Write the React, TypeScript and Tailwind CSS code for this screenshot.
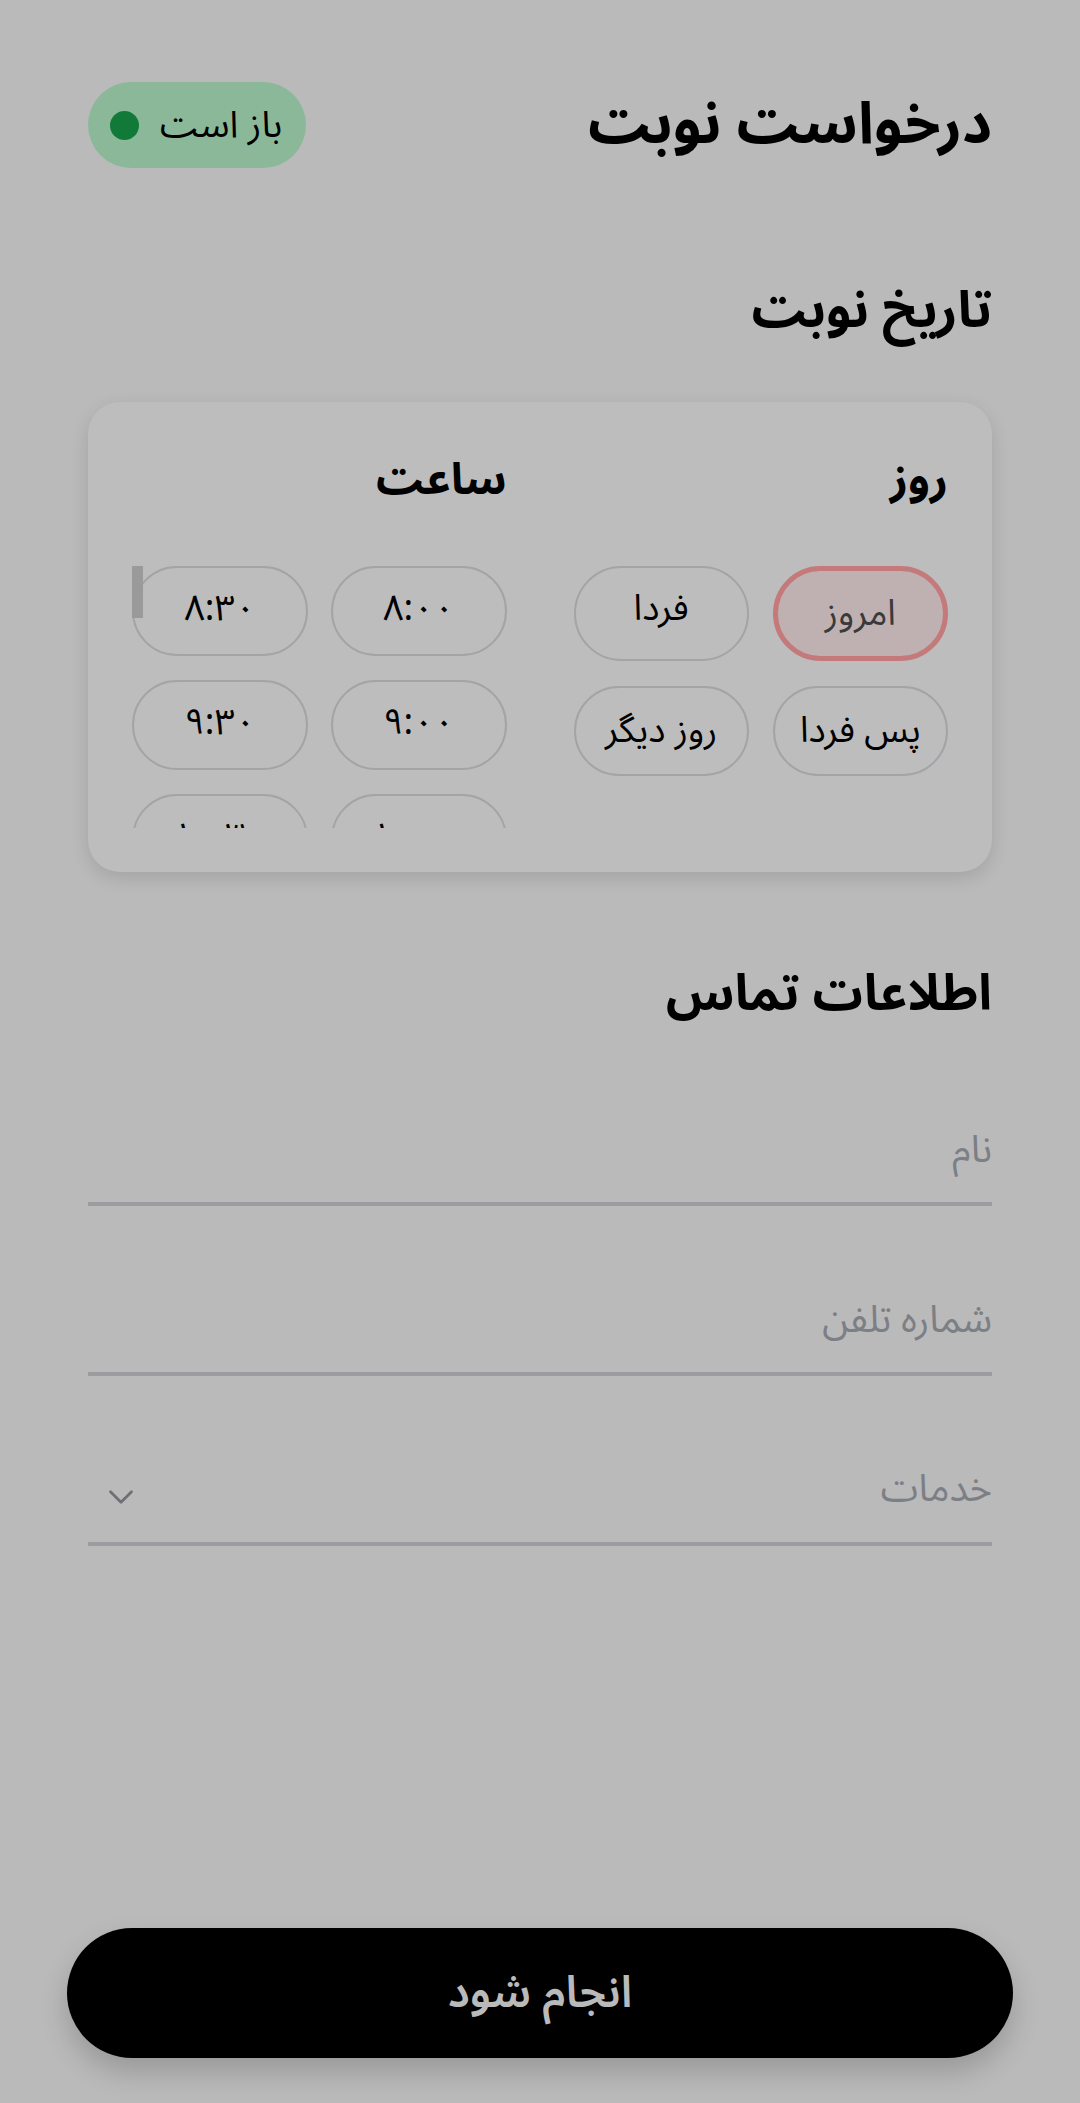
import { ChevronDown } from "lucide-react";

const days = ["امروز", "فردا", "پس فردا", "روز دیگر"];
const times = ["۸:۰۰", "۸:۳۰", "۹:۰۰", "۹:۳۰", "۱۰:۰۰", "۱۰:۳۰"];

export default function App() {
  return (
    <main
      dir="rtl"
      className="min-h-[2103px] bg-[#bababa] flex flex-col text-black"
      style={{ fontFamily: '"Noto Sans Arabic", "DejaVu Sans", sans-serif' }}
    >
      <div className="px-[88px] pt-[82px]">
        {/* Header */}
        <div className="flex items-center justify-between h-[86px]">
          <h1 className="text-[58px] font-bold leading-none">درخواست نوبت</h1>
          <div className="flex items-center gap-[21px] h-[86px] pr-[24px] pl-[22px] rounded-full bg-[#8cb89a]">
            <span className="text-[37px] leading-none">باز است</span>
            <span className="w-[29px] h-[29px] rounded-full bg-[#117a38]" />
          </div>
        </div>

        {/* Date */}
        <h2 className="mt-[107px] text-[51px] font-bold leading-[72px]">تاریخ نوبت</h2>

        <div className="mt-[55px] rounded-[32px] bg-[#bdbdbd] shadow-[0_6px_18px_rgba(0,0,0,0.12)] p-[44px]">
          <div className="grid grid-cols-2 gap-x-[67px]">
            <div>
              <h3 className="text-[44px] font-bold leading-[68px]">روز</h3>
              <div className="mt-[52px] grid grid-cols-2 gap-x-[24px] gap-y-[25px]">
                {days.map((d, i) => (
                  <button
                    key={d}
                    className={
                      i === 0
                        ? "h-[95px] rounded-full border-[5px] border-[#c47a7a] bg-[#bfb1b2] text-[#3a3a3a] text-[36px]"
                        : i === 1
                          ? "h-[95px] rounded-full border-2 border-[#a3a4a8] text-[36px] pb-[10px]"
                          : "h-[90px] rounded-full border-2 border-[#a3a4a8] text-[36px]"
                    }
                  >
                    {d}
                  </button>
                ))}
              </div>
            </div>

            <div>
              <h3 className="text-[44px] font-bold leading-[68px]">ساعت</h3>
              <div className="relative mt-[52px] h-[262px] overflow-hidden">
                <div className="grid grid-cols-2 gap-x-[23px] gap-y-[24px]">
                  {times.map((t) => (
                    <button
                      key={t}
                      className="h-[90px] rounded-full border-2 border-[#a3a4a8] text-[36px] pb-[4px]"
                    >
                      {t}
                    </button>
                  ))}
                </div>
                <div className="absolute left-0 top-0 w-[11px] h-[52px] bg-[#9a9a9a]" />
              </div>
            </div>
          </div>
        </div>

        {/* Contact */}
        <h2 className="mt-[86px] text-[50px] font-bold leading-[72px]">اطلاعات تماس</h2>

        <div className="h-[176px] flex items-end justify-between pb-[27px] border-b-4 border-[#9a9ca0]">
          <span className="text-[38px] leading-[50px] text-[#7c7f85]">نام</span>
        </div>
        <div className="h-[170px] flex items-end justify-between pb-[27px] border-b-4 border-[#9a9ca0]">
          <span className="text-[38px] leading-[50px] text-[#7c7f85]">شماره تلفن</span>
        </div>
        <div className="h-[170px] flex items-end justify-between pb-[28px] border-b-4 border-[#9a9ca0]">
          <span className="text-[38px] leading-[50px] text-[#7c7f85]">خدمات</span>
          <ChevronDown className="w-[42px] h-[42px] ml-[12px] mb-[-4px] text-[#6e7075]" strokeWidth={1.6} />
        </div>
      </div>

      <div className="mt-auto px-[67px] pb-[45px]">
        <button className="w-full h-[130px] rounded-full bg-black text-[#bababa] text-[44px] font-semibold shadow-[0_14px_28px_rgba(0,0,0,0.18)]">
          انجام شود
        </button>
      </div>
    </main>
  );
}
